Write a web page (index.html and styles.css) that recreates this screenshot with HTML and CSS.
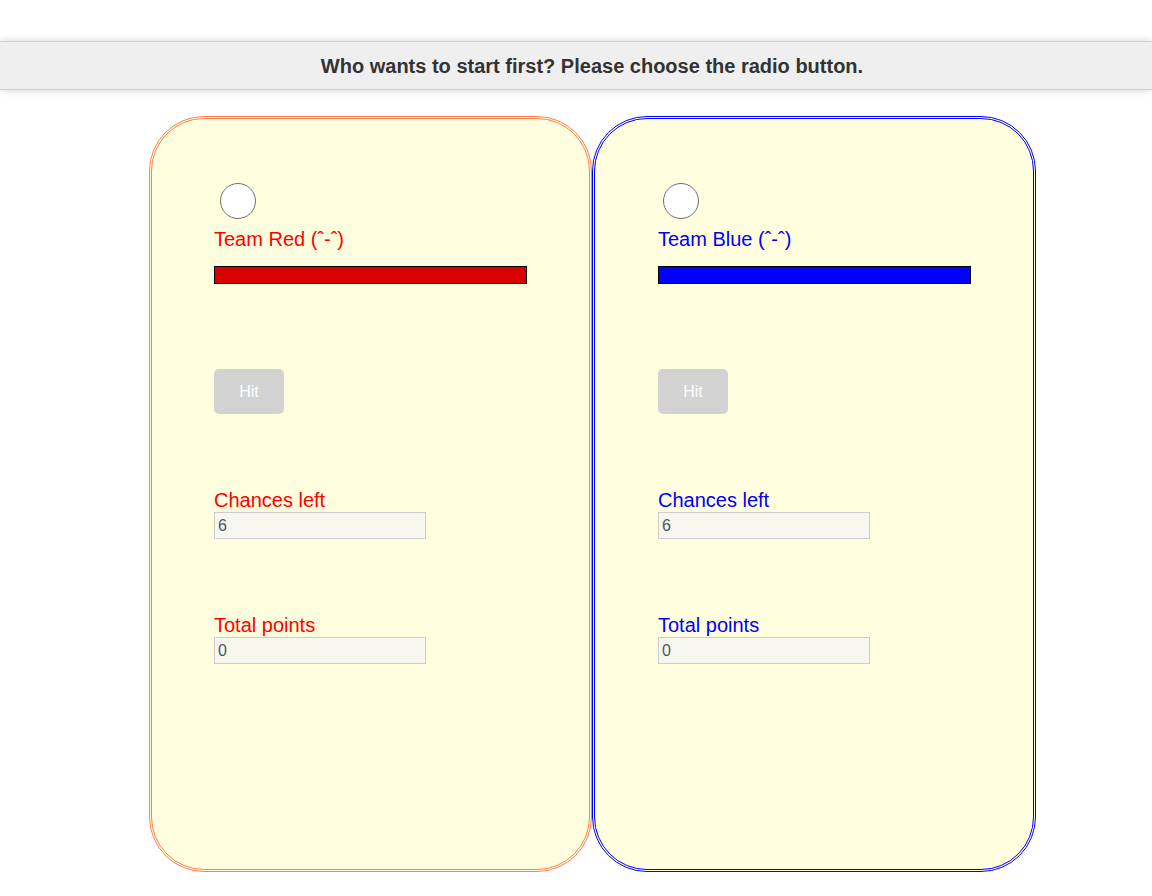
FILE: index.html
```html
<!DOCTYPE html>
<html>
<head>
<meta charset="utf-8">
<title>Game</title>
<link rel="stylesheet" href="styles.css">
</head>
<body>
<header class="topbar">Who wants to start first? Please choose the radio button.</header>
<main class="board">
  <section class="card card-red">
    <input type="radio" name="first" class="radio">
    <div class="team-name">Team Red (ˆ-ˆ)</div>
    <div class="bar bar-red"></div>
    <button class="hit">Hit</button>
    <div class="field-label">Chances left</div>
    <input class="field" type="text" value="6" readonly>
    <div class="field-label">Total points</div>
    <input class="field" type="text" value="0" readonly>
  </section>
  <section class="card card-blue">
    <input type="radio" name="first" class="radio">
    <div class="team-name">Team Blue (ˆ-ˆ)</div>
    <div class="bar bar-blue"></div>
    <button class="hit">Hit</button>
    <div class="field-label">Chances left</div>
    <input class="field" type="text" value="6" readonly>
    <div class="field-label">Total points</div>
    <input class="field" type="text" value="0" readonly>
  </section>
</main>
</body>
</html>
```
FILE: styles.css
```css
html, body {
  margin: 0;
  padding: 0;
  background: #ffffff;
  font-family: "Liberation Sans", Arial, sans-serif;
}

.topbar {
  margin-top: 41px;
  height: 47px;
  line-height: 48px;
  padding-left: 32px;
  background: #efefef;
  border-top: 1px solid #cfcfcf;
  border-bottom: 1px solid #cfcfcf;
  box-shadow: 0 0 8px rgba(0, 0, 0, 0.18);
  text-align: center;
  font-size: 20px;
  font-weight: bold;
  color: #333333;
}

.board {
  display: flex;
  padding-left: 149px;
  margin-top: 26px;
}

.card {
  box-sizing: border-box;
  width: 443px;
  height: 756px;
  border-radius: 55px;
  background: #ffffe0;
  padding: 64px 0 0 62px;
  display: flex;
  flex-direction: column;
  align-items: flex-start;
}

.card-red {
  border: 3px double #ff7f50;
  color: #ff0000;
}

.card-blue {
  width: 444px;
  padding-left: 63px;
  border: 3px double #0000ff;
  color: #0000ff;
}

.card-blue .radio {
  margin-left: 5px;
}

.radio {
  appearance: none;
  -webkit-appearance: none;
  box-sizing: border-box;
  width: 36px;
  height: 36px;
  margin: 0 0 0 6px;
  border: 1.5px solid #6e6e6e;
  border-radius: 50%;
  background: #ffffff;
}

.team-name {
  margin-top: 9px;
  font-size: 20px;
  line-height: 23px;
}

.bar {
  box-sizing: border-box;
  width: 313px;
  height: 18px;
  margin-top: 15px;
  border: 1px solid #000000;
}

.bar-red { background: #d90000; }
.bar-blue { background: #0000ff; }

.hit {
  margin-top: 85px;
  width: 70px;
  height: 45px;
  border: none;
  border-radius: 5px;
  background: #d3d3d3;
  color: #ffffff;
  font-family: "Liberation Sans", Arial, sans-serif;
  font-size: 16px;
  padding: 0;
}

.field-label {
  margin-top: 75px;
  font-size: 20px;
  line-height: 23px;
}

.field {
  box-sizing: border-box;
  width: 212px;
  height: 27px;
  margin-top: 0;
  padding: 0 3px;
  border: 1px solid #cccccc;
  background: #f7f7f0;
  color: #4a5766;
  font-family: "Liberation Sans", Arial, sans-serif;
  font-size: 16px;
  outline: none;
}
```
